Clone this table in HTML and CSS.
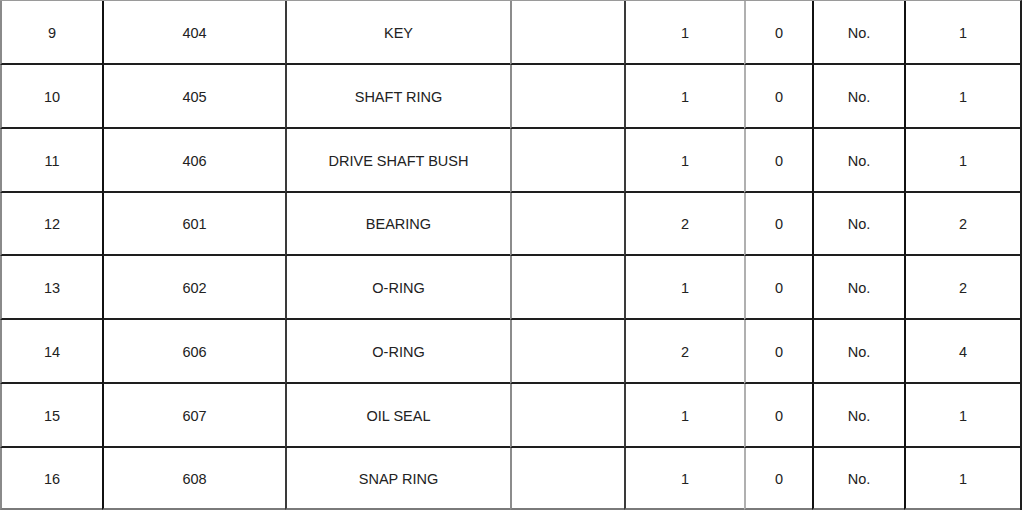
FILE: index.html
```html
<!DOCTYPE html>
<html>
<head>
<meta charset="utf-8">
<link rel="stylesheet" href="styles.css">
</head>
<body>
<div class="sheet">
  <div class="cell c1">9</div><div class="cell c2">404</div><div class="cell c3">KEY</div><div class="cell c4"></div><div class="cell c5">1</div><div class="cell c6">0</div><div class="cell c7">No.</div><div class="cell c8">1</div>
  <div class="cell c1">10</div><div class="cell c2">405</div><div class="cell c3">SHAFT RING</div><div class="cell c4"></div><div class="cell c5">1</div><div class="cell c6">0</div><div class="cell c7">No.</div><div class="cell c8">1</div>
  <div class="cell c1">11</div><div class="cell c2">406</div><div class="cell c3">DRIVE SHAFT BUSH</div><div class="cell c4"></div><div class="cell c5">1</div><div class="cell c6">0</div><div class="cell c7">No.</div><div class="cell c8">1</div>
  <div class="cell c1">12</div><div class="cell c2">601</div><div class="cell c3">BEARING</div><div class="cell c4"></div><div class="cell c5">2</div><div class="cell c6">0</div><div class="cell c7">No.</div><div class="cell c8">2</div>
  <div class="cell c1">13</div><div class="cell c2">602</div><div class="cell c3">O-RING</div><div class="cell c4"></div><div class="cell c5">1</div><div class="cell c6">0</div><div class="cell c7">No.</div><div class="cell c8">2</div>
  <div class="cell c1">14</div><div class="cell c2">606</div><div class="cell c3">O-RING</div><div class="cell c4"></div><div class="cell c5">2</div><div class="cell c6">0</div><div class="cell c7">No.</div><div class="cell c8">4</div>
  <div class="cell c1">15</div><div class="cell c2">607</div><div class="cell c3">OIL SEAL</div><div class="cell c4"></div><div class="cell c5">1</div><div class="cell c6">0</div><div class="cell c7">No.</div><div class="cell c8">1</div>
  <div class="cell c1 last">16</div><div class="cell c2 last">608</div><div class="cell c3 last">SNAP RING</div><div class="cell c4 last"></div><div class="cell c5 last">1</div><div class="cell c6 last">0</div><div class="cell c7 last">No.</div><div class="cell c8 last">1</div>
</div>
</body>
</html>
```

FILE: styles.css
```css
html, body {
  margin: 0;
  padding: 0;
  background: #ffffff;
}

.sheet {
  display: grid;
  grid-template-columns: 102px 183px 225px 114px 120px 68px 92px 116px;
  grid-template-rows: 64px 64px 64px 63px 64px 64px 64px 62px;
  width: max-content;
  border-top: 1px solid #9a9a9a;
  border-right: 2px solid #1e1e1e;
  font-family: "Liberation Sans", Arial, sans-serif;
  font-size: 14.5px;
  color: #222222;
}

.cell {
  box-sizing: border-box;
  display: flex;
  align-items: center;
  justify-content: center;
  padding-top: 1px;
  border-bottom: 2px solid #1e1e1e;
  white-space: nowrap;
}

.cell.last {
  border-bottom-color: #7a7a7a;
}

.c1 { border-left: 2px solid #8a8a8a; }
.c2 { border-left: 2px solid #111111; }
.c3 { border-left: 2px solid #3a3a3a; }
.c4 { border-left: 2px solid #8c8c8c; }
.c5 { border-left: 2px solid #3a3a3a; }
.c6 { border-left: 2px solid #b0b0b0; }
.c7 { border-left: 2px solid #111111; }
.c8 { border-left: 2px solid #111111; }
```
